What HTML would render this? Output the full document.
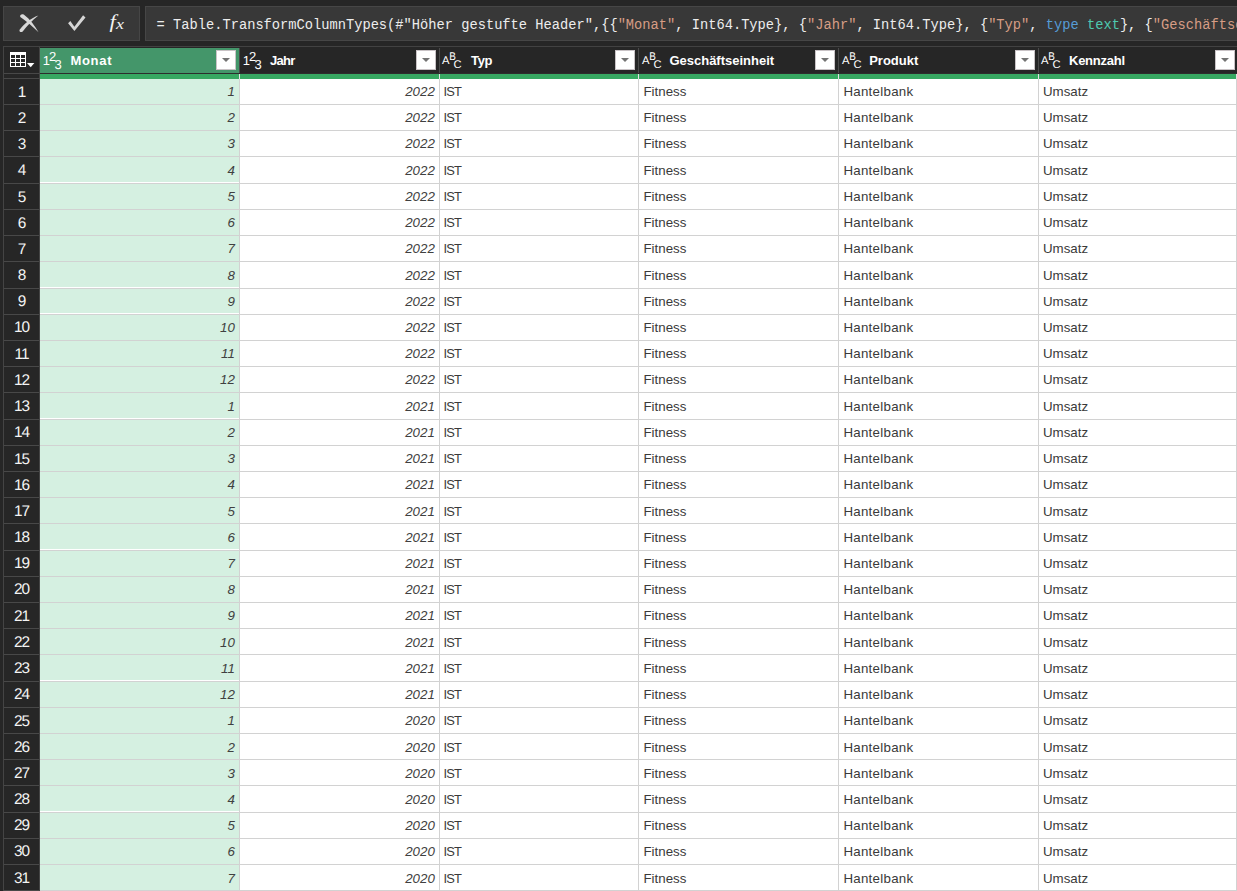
<!DOCTYPE html><html lang="de"><head><meta charset="utf-8"><title>Power Query</title><style>
*{box-sizing:border-box;margin:0;padding:0}
html,body{width:1237px;height:891px;overflow:hidden;background:#262626}
body{position:relative;font-family:"Liberation Sans",sans-serif;}
.abs{position:absolute}
#tb{left:3px;top:6px;width:137px;height:35px;background:#383838;border:1px solid #464646}
#fb{left:145px;top:6px;width:1100px;height:35px;background:#383838;border:1px solid #464646;overflow:hidden;white-space:pre;
 font-family:"Liberation Mono","DejaVu Sans Mono",monospace;font-size:13.73px;line-height:37px;color:#ededed;padding-left:10.6px;}
#fb .s{color:#d69d85}#fb .k{color:#569cd6}#fb .t{color:#4ec9b0}
#fx b,#fx i{position:absolute;font-family:"Liberation Serif",serif;font-style:italic;font-weight:normal;line-height:20px;color:#f2f2f2}
#fx b{left:110.4px;top:11.6px;font-size:19.5px;transform:scaleX(1.15);transform-origin:50% 50%}#fx i{left:116.4px;top:14.4px;font-size:15px;transform:scaleX(1.2);transform-origin:0 50%}
#hl{left:3px;top:46px;width:1234px;height:1px;background:#424242}
#vl{left:3px;top:46px;width:1px;height:845px;background:#444}
#vr{left:39px;top:47px;width:1px;height:845px;background:#444}
.hln{left:4px;width:35px;height:1px;background:#484848}
.hc{top:48px;height:25px;color:#fff;font-weight:bold;font-size:13px;line-height:25px;white-space:nowrap}
.hc.sel{background:#44966a;}
.hsep{top:48px;width:1px;height:25px;background:#4a4a4a}
.hc .lbl{position:absolute;top:0}
.fbtn{position:absolute;top:2px;width:20px;height:20px;background:#fff;border:1px solid #c9c3c6}
.fbtn i{position:absolute;left:4.8px;top:6.9px;width:0;height:0;border-left:4.2px solid transparent;border-right:4.2px solid transparent;border-top:4.2px solid #737373}
.hb{left:40px;top:73px;width:1197px;height:1px;background:#2d2d2d}
.gbar{left:40px;top:74px;width:1197px;height:5px;background:#37a862}
.gt{top:74px;width:1px;height:5px;background:#e4e0e2}
.rh{left:4px;width:35px;color:#f4f4f4;font-size:15.4px;text-align:center;border-bottom:1px solid #484848;padding-left:0;letter-spacing:-1px}

.row{left:40px;width:1197px;background:#fff;border-bottom:1px solid #d2d2d2;font-size:13.3px;color:#3a3a3a;}
.c{position:absolute;top:0;bottom:0;white-space:nowrap;padding:0 0 0 4px}
.vg{top:79px;width:1px;height:812px;background:#d2d2d2}
.c.n{text-align:right;font-style:italic;color:#404040;padding:0 4.2px 0 0}
.c.sel{background:#d5f0e1}.c.g{bottom:1px}
.row{line-height:25px}.row.d .c{padding-top:1px}.row.u .c{margin-top:-1px}
.rh{line-height:25px;overflow:hidden;text-rendering:geometricPrecision}
svg text{text-rendering:geometricPrecision}
.c.t{padding-left:3.4px;font-size:12.9px;letter-spacing:-.75px}
.c.p{letter-spacing:.28px;padding-left:4.4px}
.c.f{padding-left:4.5px}
</style></head><body>
<div id="tb" class="abs"></div>
<svg class="abs" style="left:0;top:0" width="145" height="45" viewBox="0 0 145 45"><path d="M20.3 17 C19.4 14.9 22 13.5 24 14.8 C29.8 19.2 34.6 25.2 38.5 32.3 C33 26.8 26.8 21.6 20.3 17 Z" fill="#d8d8d8"/><path d="M19.6 29.8 C18.8 31.8 21.3 32.9 22.7 31.4 C27.2 26.2 32 20.4 38.4 15.6 C31 18.2 24.4 23.6 19.6 29.8 Z" fill="#d8d8d8"/><path d="M68.1 23.2 L70.3 21.1 L74.4 26.7 L83.1 15.2 L85.5 17.4 L74.4 31.1 Z" fill="#d6d6d6"/></svg>
<div id="fx" class="abs"><b>f</b><i>x</i></div>
<div id="fb" class="abs">= Table.TransformColumnTypes(#"Höher gestufte Header",{{<span class="s">"Monat"</span>, Int64.Type}, {<span class="s">"Jahr"</span>, Int64.Type}, {<span class="s">"Typ"</span>, <span class="k">type</span> <span class="t">text</span>}, {<span class="s">"Geschäftseinheit"</span>, <span class="k">type</span> <span class="t">text</span>}, {<span class="s">"Produkt"</span>, <span class="k">type</span> <span class="t">text</span>}})</div>
<div id="hl" class="abs"></div><div id="vl" class="abs"></div><div id="vr" class="abs"></div>
<div class="abs hln" style="top:73px"></div><div class="abs hln" style="top:78px"></div>
<svg class="abs" style="left:0;top:44px" width="40" height="30" viewBox="0 44 40 30"><rect x="10" y="52" width="16" height="15" fill="#fff"/><rect x="11" y="55" width="4" height="3" fill="#262626"/><rect x="11" y="59" width="4" height="3" fill="#262626"/><rect x="11" y="63" width="4" height="3" fill="#262626"/><rect x="16" y="55" width="4" height="3" fill="#262626"/><rect x="16" y="59" width="4" height="3" fill="#262626"/><rect x="16" y="63" width="4" height="3" fill="#262626"/><rect x="21" y="55" width="4" height="3" fill="#262626"/><rect x="21" y="59" width="4" height="3" fill="#262626"/><rect x="21" y="63" width="4" height="3" fill="#262626"/><path d="M27 63 h7.4 l-3.7 4.3 z" fill="#fff"/></svg>
<div class="abs hc sel" style="left:40px;width:199px"><svg class="abs" style="left:0;top:0" width="26" height="25" viewBox="0 0 26 25"><g fill="#fff" font-family="Liberation Sans,sans-serif" font-size="13" font-weight="normal"><text x="2.7" y="16.8">1</text><text x="9" y="13">2</text><text x="14.6" y="20.6">3</text></g></svg><span class="lbl" style="left:30.4px;letter-spacing:0.7px">Monat</span><span class="fbtn" style="left:176px"><i></i></span></div>
<div class="abs hc" style="left:240px;width:199px"><svg class="abs" style="left:0;top:0" width="26" height="25" viewBox="0 0 26 25"><g fill="#fff" font-family="Liberation Sans,sans-serif" font-size="13" font-weight="normal"><text x="2.7" y="16.8">1</text><text x="9" y="13">2</text><text x="14.6" y="20.6">3</text></g></svg><span class="lbl" style="left:30px;letter-spacing:-0.7px">Jahr</span><span class="fbtn" style="left:176px"><i></i></span></div>
<div class="abs hsep" style="left:239px"></div>
<div class="abs hc" style="left:440px;width:198px"><svg class="abs" style="left:0;top:0" width="26" height="25" viewBox="0 0 26 25"><g fill="#fff" font-family="Liberation Sans,sans-serif" font-size="11.2" font-weight="normal"><text x="2" y="16">A</text><text x="9.2" y="12" textLength="6.6" lengthAdjust="spacingAndGlyphs">B</text><text x="13.5" y="20">C</text></g></svg><span class="lbl" style="left:31px;letter-spacing:-0.3px">Typ</span><span class="fbtn" style="left:175px"><i></i></span></div>
<div class="abs hsep" style="left:439px"></div>
<div class="abs hc" style="left:639px;width:199px"><svg class="abs" style="left:1px;top:0" width="26" height="25" viewBox="0 0 26 25"><g fill="#fff" font-family="Liberation Sans,sans-serif" font-size="11.2" font-weight="normal"><text x="2" y="16">A</text><text x="9.2" y="12" textLength="6.6" lengthAdjust="spacingAndGlyphs">B</text><text x="13.5" y="20">C</text></g></svg><span class="lbl" style="left:30.4px;letter-spacing:0px">Geschäftseinheit</span><span class="fbtn" style="left:176px"><i></i></span></div>
<div class="abs hsep" style="left:638px"></div>
<div class="abs hc" style="left:839px;width:199px"><svg class="abs" style="left:1px;top:0" width="26" height="25" viewBox="0 0 26 25"><g fill="#fff" font-family="Liberation Sans,sans-serif" font-size="11.2" font-weight="normal"><text x="2" y="16">A</text><text x="9.2" y="12" textLength="6.6" lengthAdjust="spacingAndGlyphs">B</text><text x="13.5" y="20">C</text></g></svg><span class="lbl" style="left:30.2px;letter-spacing:0px">Produkt</span><span class="fbtn" style="left:176px"><i></i></span></div>
<div class="abs hsep" style="left:838px"></div>
<div class="abs hc" style="left:1039px;width:197px"><svg class="abs" style="left:0;top:0" width="26" height="25" viewBox="0 0 26 25"><g fill="#fff" font-family="Liberation Sans,sans-serif" font-size="11.2" font-weight="normal"><text x="2" y="16">A</text><text x="9.2" y="12" textLength="6.6" lengthAdjust="spacingAndGlyphs">B</text><text x="13.5" y="20">C</text></g></svg><span class="lbl" style="left:30px;letter-spacing:-0.25px">Kennzahl</span><span class="fbtn" style="left:176px"><i></i></span></div>
<div class="abs hsep" style="left:1038px"></div>
<div class="abs hb"></div><div class="abs gbar"></div>
<div class="abs gt" style="left:239px"></div>
<div class="abs gt" style="left:439px"></div>
<div class="abs gt" style="left:638px"></div>
<div class="abs gt" style="left:838px"></div>
<div class="abs gt" style="left:1038px"></div>
<div class="abs gt" style="left:1236px"></div>
<div class="abs rh" style="top:79px;height:26px;padding-top:1px"><span>1</span></div>
<div class="abs row" style="top:79px;height:26px"><div class="c n sel" style="left:0px;width:199px">1</div><div class="c n" style="left:200px;width:199px">2022</div><div class="c t" style="left:400px;width:198px">IST</div><div class="c f" style="left:599px;width:199px">Fitness</div><div class="c p" style="left:799px;width:199px">Hantelbank</div><div class="c u" style="left:999px;width:197px">Umsatz</div></div>
<div class="abs rh" style="top:105px;height:26px;padding-top:1px"><span>2</span></div>
<div class="abs row" style="top:105px;height:26px"><div class="c n sel" style="left:0px;width:199px">2</div><div class="c n" style="left:200px;width:199px">2022</div><div class="c t" style="left:400px;width:198px">IST</div><div class="c f" style="left:599px;width:199px">Fitness</div><div class="c p" style="left:799px;width:199px">Hantelbank</div><div class="c u" style="left:999px;width:197px">Umsatz</div></div>
<div class="abs rh" style="top:131px;height:26px;padding-top:1px"><span>3</span></div>
<div class="abs row" style="top:131px;height:26px"><div class="c n sel" style="left:0px;width:199px">3</div><div class="c n" style="left:200px;width:199px">2022</div><div class="c t" style="left:400px;width:198px">IST</div><div class="c f" style="left:599px;width:199px">Fitness</div><div class="c p" style="left:799px;width:199px">Hantelbank</div><div class="c u" style="left:999px;width:197px">Umsatz</div></div>
<div class="abs rh" style="top:157px;height:27px;padding-top:1px"><span>4</span></div>
<div class="abs row d" style="top:157px;height:27px"><div class="c n sel g" style="left:0px;width:199px">4</div><div class="c n" style="left:200px;width:199px">2022</div><div class="c t" style="left:400px;width:198px">IST</div><div class="c f" style="left:599px;width:199px">Fitness</div><div class="c p" style="left:799px;width:199px">Hantelbank</div><div class="c u" style="left:999px;width:197px">Umsatz</div></div>
<div class="abs rh" style="top:184px;height:26px;padding-top:1px"><span>5</span></div>
<div class="abs row" style="top:184px;height:26px"><div class="c n sel" style="left:0px;width:199px">5</div><div class="c n" style="left:200px;width:199px">2022</div><div class="c t" style="left:400px;width:198px">IST</div><div class="c f" style="left:599px;width:199px">Fitness</div><div class="c p" style="left:799px;width:199px">Hantelbank</div><div class="c u" style="left:999px;width:197px">Umsatz</div></div>
<div class="abs rh" style="top:210px;height:26px;padding-top:1px"><span>6</span></div>
<div class="abs row" style="top:210px;height:26px"><div class="c n sel" style="left:0px;width:199px">6</div><div class="c n" style="left:200px;width:199px">2022</div><div class="c t" style="left:400px;width:198px">IST</div><div class="c f" style="left:599px;width:199px">Fitness</div><div class="c p" style="left:799px;width:199px">Hantelbank</div><div class="c u" style="left:999px;width:197px">Umsatz</div></div>
<div class="abs rh" style="top:236px;height:26px;padding-top:1px"><span>7</span></div>
<div class="abs row" style="top:236px;height:26px"><div class="c n sel" style="left:0px;width:199px">7</div><div class="c n" style="left:200px;width:199px">2022</div><div class="c t" style="left:400px;width:198px">IST</div><div class="c f" style="left:599px;width:199px">Fitness</div><div class="c p" style="left:799px;width:199px">Hantelbank</div><div class="c u" style="left:999px;width:197px">Umsatz</div></div>
<div class="abs rh" style="top:262px;height:27px;padding-top:1px"><span>8</span></div>
<div class="abs row d" style="top:262px;height:27px"><div class="c n sel g" style="left:0px;width:199px">8</div><div class="c n" style="left:200px;width:199px">2022</div><div class="c t" style="left:400px;width:198px">IST</div><div class="c f" style="left:599px;width:199px">Fitness</div><div class="c p" style="left:799px;width:199px">Hantelbank</div><div class="c u" style="left:999px;width:197px">Umsatz</div></div>
<div class="abs rh" style="top:289px;height:26px;padding-top:0px"><span>9</span></div>
<div class="abs row" style="top:289px;height:26px"><div class="c n sel g" style="left:0px;width:199px">9</div><div class="c n" style="left:200px;width:199px">2022</div><div class="c t" style="left:400px;width:198px">IST</div><div class="c f" style="left:599px;width:199px">Fitness</div><div class="c p" style="left:799px;width:199px">Hantelbank</div><div class="c u" style="left:999px;width:197px">Umsatz</div></div>
<div class="abs rh" style="top:315px;height:26px;padding-top:0px"><span>10</span></div>
<div class="abs row" style="top:315px;height:26px"><div class="c n sel" style="left:0px;width:199px">10</div><div class="c n" style="left:200px;width:199px">2022</div><div class="c t" style="left:400px;width:198px">IST</div><div class="c f" style="left:599px;width:199px">Fitness</div><div class="c p" style="left:799px;width:199px">Hantelbank</div><div class="c u" style="left:999px;width:197px">Umsatz</div></div>
<div class="abs rh" style="top:341px;height:26px;padding-top:1px"><span>11</span></div>
<div class="abs row" style="top:341px;height:26px"><div class="c n sel" style="left:0px;width:199px">11</div><div class="c n" style="left:200px;width:199px">2022</div><div class="c t" style="left:400px;width:198px">IST</div><div class="c f" style="left:599px;width:199px">Fitness</div><div class="c p" style="left:799px;width:199px">Hantelbank</div><div class="c u" style="left:999px;width:197px">Umsatz</div></div>
<div class="abs rh" style="top:367px;height:26px;padding-top:1px"><span>12</span></div>
<div class="abs row" style="top:367px;height:26px"><div class="c n sel" style="left:0px;width:199px">12</div><div class="c n" style="left:200px;width:199px">2022</div><div class="c t" style="left:400px;width:198px">IST</div><div class="c f" style="left:599px;width:199px">Fitness</div><div class="c p" style="left:799px;width:199px">Hantelbank</div><div class="c u" style="left:999px;width:197px">Umsatz</div></div>
<div class="abs rh" style="top:393px;height:27px;padding-top:1px"><span>13</span></div>
<div class="abs row d" style="top:393px;height:27px"><div class="c n sel g" style="left:0px;width:199px">1</div><div class="c n" style="left:200px;width:199px">2021</div><div class="c t" style="left:400px;width:198px">IST</div><div class="c f" style="left:599px;width:199px">Fitness</div><div class="c p" style="left:799px;width:199px">Hantelbank</div><div class="c u" style="left:999px;width:197px">Umsatz</div></div>
<div class="abs rh" style="top:420px;height:26px;padding-top:0px"><span>14</span></div>
<div class="abs row" style="top:420px;height:26px"><div class="c n sel" style="left:0px;width:199px">2</div><div class="c n" style="left:200px;width:199px">2021</div><div class="c t" style="left:400px;width:198px">IST</div><div class="c f" style="left:599px;width:199px">Fitness</div><div class="c p" style="left:799px;width:199px">Hantelbank</div><div class="c u" style="left:999px;width:197px">Umsatz</div></div>
<div class="abs rh" style="top:446px;height:26px;padding-top:1px"><span>15</span></div>
<div class="abs row" style="top:446px;height:26px"><div class="c n sel" style="left:0px;width:199px">3</div><div class="c n" style="left:200px;width:199px">2021</div><div class="c t" style="left:400px;width:198px">IST</div><div class="c f" style="left:599px;width:199px">Fitness</div><div class="c p" style="left:799px;width:199px">Hantelbank</div><div class="c u" style="left:999px;width:197px">Umsatz</div></div>
<div class="abs rh" style="top:472px;height:26px;padding-top:1px"><span>16</span></div>
<div class="abs row" style="top:472px;height:26px"><div class="c n sel" style="left:0px;width:199px">4</div><div class="c n" style="left:200px;width:199px">2021</div><div class="c t" style="left:400px;width:198px">IST</div><div class="c f" style="left:599px;width:199px">Fitness</div><div class="c p" style="left:799px;width:199px">Hantelbank</div><div class="c u" style="left:999px;width:197px">Umsatz</div></div>
<div class="abs rh" style="top:498px;height:26px;padding-top:1px"><span>17</span></div>
<div class="abs row d" style="top:498px;height:26px"><div class="c n sel" style="left:0px;width:199px">5</div><div class="c n" style="left:200px;width:199px">2021</div><div class="c t" style="left:400px;width:198px">IST</div><div class="c f" style="left:599px;width:199px">Fitness</div><div class="c p" style="left:799px;width:199px">Hantelbank</div><div class="c u" style="left:999px;width:197px">Umsatz</div></div>
<div class="abs rh" style="top:524px;height:27px;padding-top:1px"><span>18</span></div>
<div class="abs row d" style="top:524px;height:27px"><div class="c n sel g" style="left:0px;width:199px">6</div><div class="c n" style="left:200px;width:199px">2021</div><div class="c t" style="left:400px;width:198px">IST</div><div class="c f" style="left:599px;width:199px">Fitness</div><div class="c p" style="left:799px;width:199px">Hantelbank</div><div class="c u" style="left:999px;width:197px">Umsatz</div></div>
<div class="abs rh" style="top:551px;height:26px;padding-top:0px"><span>19</span></div>
<div class="abs row" style="top:551px;height:26px"><div class="c n sel" style="left:0px;width:199px">7</div><div class="c n" style="left:200px;width:199px">2021</div><div class="c t" style="left:400px;width:198px">IST</div><div class="c f" style="left:599px;width:199px">Fitness</div><div class="c p" style="left:799px;width:199px">Hantelbank</div><div class="c u" style="left:999px;width:197px">Umsatz</div></div>
<div class="abs rh" style="top:577px;height:26px;padding-top:0px"><span>20</span></div>
<div class="abs row" style="top:577px;height:26px"><div class="c n sel" style="left:0px;width:199px">8</div><div class="c n" style="left:200px;width:199px">2021</div><div class="c t" style="left:400px;width:198px">IST</div><div class="c f" style="left:599px;width:199px">Fitness</div><div class="c p" style="left:799px;width:199px">Hantelbank</div><div class="c u" style="left:999px;width:197px">Umsatz</div></div>
<div class="abs rh" style="top:603px;height:26px;padding-top:1px"><span>21</span></div>
<div class="abs row" style="top:603px;height:26px"><div class="c n sel" style="left:0px;width:199px">9</div><div class="c n" style="left:200px;width:199px">2021</div><div class="c t" style="left:400px;width:198px">IST</div><div class="c f" style="left:599px;width:199px">Fitness</div><div class="c p" style="left:799px;width:199px">Hantelbank</div><div class="c u" style="left:999px;width:197px">Umsatz</div></div>
<div class="abs rh" style="top:629px;height:26px;padding-top:1px"><span>22</span></div>
<div class="abs row d" style="top:629px;height:26px"><div class="c n sel" style="left:0px;width:199px">10</div><div class="c n" style="left:200px;width:199px">2021</div><div class="c t" style="left:400px;width:198px">IST</div><div class="c f" style="left:599px;width:199px">Fitness</div><div class="c p" style="left:799px;width:199px">Hantelbank</div><div class="c u" style="left:999px;width:197px">Umsatz</div></div>
<div class="abs rh" style="top:655px;height:27px;padding-top:1px"><span>23</span></div>
<div class="abs row d" style="top:655px;height:27px"><div class="c n sel g" style="left:0px;width:199px">11</div><div class="c n" style="left:200px;width:199px">2021</div><div class="c t" style="left:400px;width:198px">IST</div><div class="c f" style="left:599px;width:199px">Fitness</div><div class="c p" style="left:799px;width:199px">Hantelbank</div><div class="c u" style="left:999px;width:197px">Umsatz</div></div>
<div class="abs rh" style="top:682px;height:26px;padding-top:0px"><span>24</span></div>
<div class="abs row" style="top:682px;height:26px"><div class="c n sel" style="left:0px;width:199px">12</div><div class="c n" style="left:200px;width:199px">2021</div><div class="c t" style="left:400px;width:198px">IST</div><div class="c f" style="left:599px;width:199px">Fitness</div><div class="c p" style="left:799px;width:199px">Hantelbank</div><div class="c u" style="left:999px;width:197px">Umsatz</div></div>
<div class="abs rh" style="top:708px;height:26px;padding-top:1px"><span>25</span></div>
<div class="abs row" style="top:708px;height:26px"><div class="c n sel" style="left:0px;width:199px">1</div><div class="c n" style="left:200px;width:199px">2020</div><div class="c t" style="left:400px;width:198px">IST</div><div class="c f" style="left:599px;width:199px">Fitness</div><div class="c p" style="left:799px;width:199px">Hantelbank</div><div class="c u" style="left:999px;width:197px">Umsatz</div></div>
<div class="abs rh" style="top:734px;height:26px;padding-top:1px"><span>26</span></div>
<div class="abs row d" style="top:734px;height:26px"><div class="c n sel" style="left:0px;width:199px">2</div><div class="c n" style="left:200px;width:199px">2020</div><div class="c t" style="left:400px;width:198px">IST</div><div class="c f" style="left:599px;width:199px">Fitness</div><div class="c p" style="left:799px;width:199px">Hantelbank</div><div class="c u" style="left:999px;width:197px">Umsatz</div></div>
<div class="abs rh" style="top:760px;height:26px;padding-top:1px"><span>27</span></div>
<div class="abs row d" style="top:760px;height:26px"><div class="c n sel" style="left:0px;width:199px">3</div><div class="c n" style="left:200px;width:199px">2020</div><div class="c t" style="left:400px;width:198px">IST</div><div class="c f" style="left:599px;width:199px">Fitness</div><div class="c p" style="left:799px;width:199px">Hantelbank</div><div class="c u" style="left:999px;width:197px">Umsatz</div></div>
<div class="abs rh" style="top:786px;height:27px;padding-top:1px"><span>28</span></div>
<div class="abs row d" style="top:786px;height:27px"><div class="c n sel g" style="left:0px;width:199px">4</div><div class="c n" style="left:200px;width:199px">2020</div><div class="c t" style="left:400px;width:198px">IST</div><div class="c f" style="left:599px;width:199px">Fitness</div><div class="c p" style="left:799px;width:199px">Hantelbank</div><div class="c u" style="left:999px;width:197px">Umsatz</div></div>
<div class="abs rh" style="top:813px;height:26px;padding-top:0px"><span>29</span></div>
<div class="abs row" style="top:813px;height:26px"><div class="c n sel" style="left:0px;width:199px">5</div><div class="c n" style="left:200px;width:199px">2020</div><div class="c t" style="left:400px;width:198px">IST</div><div class="c f" style="left:599px;width:199px">Fitness</div><div class="c p" style="left:799px;width:199px">Hantelbank</div><div class="c u" style="left:999px;width:197px">Umsatz</div></div>
<div class="abs rh" style="top:839px;height:26px;padding-top:0px"><span>30</span></div>
<div class="abs row" style="top:839px;height:26px"><div class="c n sel" style="left:0px;width:199px">6</div><div class="c n" style="left:200px;width:199px">2020</div><div class="c t" style="left:400px;width:198px">IST</div><div class="c f" style="left:599px;width:199px">Fitness</div><div class="c p" style="left:799px;width:199px">Hantelbank</div><div class="c u" style="left:999px;width:197px">Umsatz</div></div>
<div class="abs rh" style="top:865px;height:26px;padding-top:1px"><span>31</span></div>
<div class="abs row d" style="top:865px;height:26px"><div class="c n sel" style="left:0px;width:199px">7</div><div class="c n" style="left:200px;width:199px">2020</div><div class="c t" style="left:400px;width:198px">IST</div><div class="c f" style="left:599px;width:199px">Fitness</div><div class="c p" style="left:799px;width:199px">Hantelbank</div><div class="c u" style="left:999px;width:197px">Umsatz</div></div>
<div class="abs vg" style="left:239px"></div>
<div class="abs vg" style="left:439px"></div>
<div class="abs vg" style="left:638px"></div>
<div class="abs vg" style="left:838px"></div>
<div class="abs vg" style="left:1038px"></div>
<div class="abs vg" style="left:1236px"></div>
</body></html>
